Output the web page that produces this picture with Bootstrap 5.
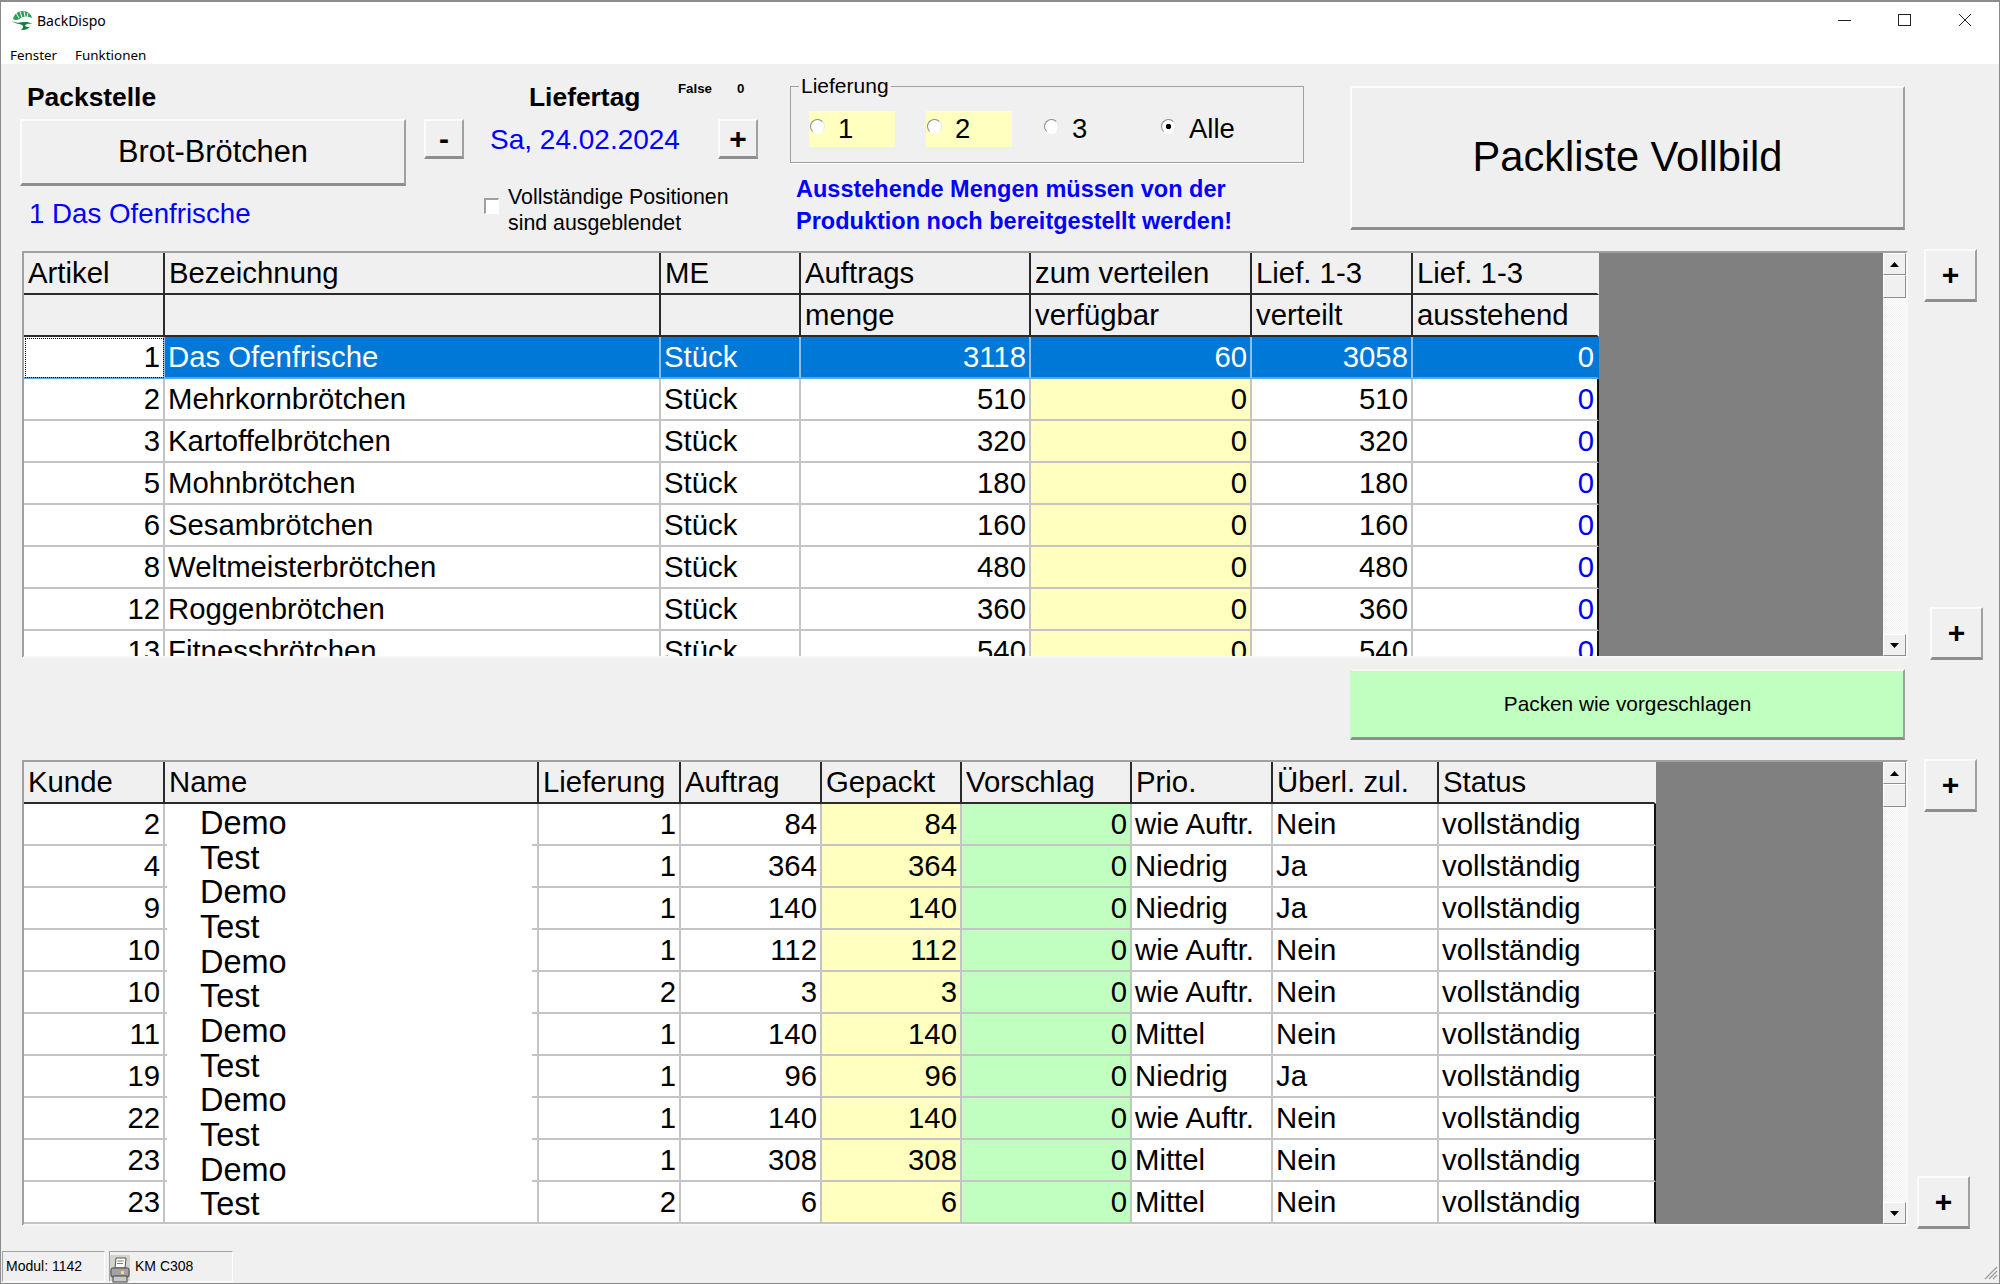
<!DOCTYPE html>
<html lang="de">
<head>
<meta charset="utf-8">
<title>BackDispo</title>
<link href="https://cdn.jsdelivr.net/npm/bootstrap@5.3.0/dist/css/bootstrap.min.css" rel="stylesheet">
<style>
html,body{margin:0;padding:0;background:#f0f0f0;}
body{font-family:"Liberation Sans",Arial,sans-serif;color:#000;}
.app-window{width:2000px;height:1284px;background:#f0f0f0;border:1px solid #8c8c8c;border-top-width:2px;overflow:hidden;}
.title-area{height:62px;background:#fff;font-family:"Noto Sans","Open Sans",sans-serif;flex:none;}
.title-row{height:38px;}
.app-logo{margin:8px 4px 0 10px;}
.app-name{font-size:14px;line-height:20px;margin-top:9px;color:#000;}
.win-ctl{width:60px;height:36px;}
.menu-row{font-size:13.4px;line-height:18px;padding:6px 0 0 9px;gap:18px;}
.tool-strip{height:187px;flex:none;}
.raised{background:#f0f0f0;border-radius:0;border:0;color:#000;padding:0;font-family:"Liberation Sans",Arial,sans-serif;
 border-top:2px solid #fbfbfb;border-left:2px solid #fbfbfb;border-right:2px solid #a0a0a0;border-bottom:3px solid #8e8e8e;}
.col-pack{margin-left:19px;width:386px;}
.lbl-head{font-weight:700;font-size:26.4px;line-height:30px;letter-spacing:0;}
.pack-head{margin-top:18px;margin-left:7px;}
.btn-brot{width:386px;height:67px;font-size:30.8px;margin-top:7px;}
.cur-art{color:#00f;font-size:27.7px;line-height:32px;margin:12px 0 0 9px;white-space:nowrap;}
.col-day{margin-left:18px;width:334px;position:relative;}
.day-top{margin-top:18px;height:37px;}
.day-head{margin-left:105px;width:149px;}
.tiny{font-size:13.3px;line-height:16px;font-weight:700;margin-top:-1px;}
.tiny-a{width:59px;}
.day-nav{height:40px;}
.btn-step{width:40px;height:40px;font-size:30px;line-height:30px;font-weight:700;}
.date-blue{color:#00f;font-size:28px;line-height:40px;margin:0 38px 0 26px;width:190px;white-space:nowrap;padding-top:1px;}
.hide-opt{margin:25px 0 0 60px;font-size:21.33px;line-height:26px;width:280px;}
.chk-box{appearance:none;width:15px;height:16px;margin:14px 9px 0 0;background:#fff;border:0;border-top:2px solid #a0a0a0;border-left:2px solid #a0a0a0;border-right:1px solid #fff;border-bottom:1px solid #fff;flex:none;}
.col-del{margin-left:32px;width:514px;margin-top:11px;}
.del-set{border:1px solid #a0a0a0;border-bottom-color:#a0a0a0;height:88px;margin:0;padding:0;width:514px;box-shadow:0 1px 0 #fff;}
.del-set legend{float:none;width:auto;font-size:21px;line-height:22px;margin:0 0 0 8px;padding:0 2px;}
.opt-wrap{padding:14px 0 0 18px;}
.opt-cell{height:36px;font-size:27.5px;line-height:36px;display:flex;align-items:center;}
.opt-yel{background:#ffffc0;width:86px;margin-right:31px;}
.opt-plain{width:117px;}
.opt-plain:last-child{width:90px;}
.opt-cell input{appearance:none;width:15px;height:15px;margin:-5px 13px 0 1px;flex:none;border-radius:50%;background:#fff;border:1px solid;border-color:#8a8a8a #e8e8e8 #fff #8a8a8a;}
.opt-cell input:checked{background:radial-gradient(circle,#000 0,#000 2.5px,#fff 3px);}
.warn-txt{color:#00f;font-weight:700;font-size:23.5px;line-height:32px;margin:10px 0 0 6px;white-space:nowrap;}
.col-full{margin-left:46px;margin-top:22px;}
.btn-full{width:555px;height:144px;font-size:41.6px;background:#efefef;}
.data-row{flex:none;}
.grid-frame{width:1886px;margin-left:21px;background:#808080;border:2px solid;border-color:#a0a0a0 #f8f8f8 #f8f8f8 #a0a0a0;position:relative;overflow:hidden;}
.grid-a{height:407px;}
.grid-b{height:466px;}
.pack-table.table{table-layout:fixed;margin:0;border-collapse:separate;border-spacing:0;font-size:29.33px;flex:none;}
.grid-a .pack-table.table{width:1575px;}
.grid-b .pack-table.table{width:1632px;}
.pack-table.table>*>tr>*{padding:0 3px;height:41.67px;line-height:40px;vertical-align:top;white-space:nowrap;overflow:hidden;box-shadow:none;background:#fff;color:#000;border:0;border-right:2px solid #c4c4c4;border-bottom:2px solid #c4c4c4;font-weight:400;}
.pack-table.table>thead>tr>th{background:#f0f0f0;border-right:2px solid #2a2a2a;border-bottom:2px solid #2a2a2a;padding-left:4px;}
.pack-table.table>thead>tr>th:last-child{border-right-color:#f0f0f0;}
.pack-table.table>*>tr>td:last-child{border-right:2px solid #111;}
.pack-table.table>*>tr>td.cell-yel{background:#ffffc0;}
.pack-table.table>*>tr>td.cell-grn{background:#c0ffc0;}
.pack-table.table>*>tr>td.cell-blue{color:#00f;}
.pack-table.table>*>tr.row-sel>td{background:#0078d7;color:#fff;border-bottom-color:#5aa6e3;border-right-color:#8dbfe8;}
.pack-table.table>*>tr.row-sel>td:last-child{border-right-color:#0078d7;}
.pack-table.table>*>tr.row-sel>td.cell-focus{background:#fff;color:#000;outline:1px dotted #000;outline-offset:-2px;}
.scroll-track{width:23px;background-color:#f4f4f4;background-image:repeating-conic-gradient(#fff 0 25%,#f0f0f0 0 50%);background-size:2px 2px;flex:none;}
.sb-btn{height:22px;background:#f0f0f0;border:1px solid;border-color:#fff #8e8e8e #8e8e8e #fff;flex:none;}
.sb-thumb{height:23px;background:#f0f0f0;border:1px solid;border-color:#fff #8e8e8e #8e8e8e #fff;flex:none;}
.filler{background:#808080;}
.side-stack{margin-left:16px;}
.side-a{height:411px;margin-top:-2px;}
.side-b{height:470px;margin-top:-1px;}
.btn-side{width:53px;height:53px;font-size:30px;line-height:30px;font-weight:700;}
.shift-a{margin-left:6px;}
.shift-b{margin-left:-7px;}
.green-row{margin:9px 0 0 1349px;flex:none;}
.btn-green{width:555px;height:71px;background:#c0ffc0;font-size:20.8px;border-top-color:#f8f8f8;border-left-color:#c0ffc0;}
.data-row-b{margin-top:20px;}
.name-cover{position:absolute;left:143px;top:44px;width:365px;height:414px;background:#fff;padding-left:33px;font-size:32.5px;line-height:34.67px;}
.status-bar{margin-top:auto;height:32px;padding-left:1px;flex:none;font-size:14px;}
.stat-box{height:31px;border:1px solid;border-color:#a0a0a0 #fff #fff #a0a0a0;line-height:29px;white-space:nowrap;}
.stat-a{width:103px;padding-left:3px;}
.stat-b{width:124px;margin-left:4px;}
.prn-box{width:20px;height:26px;background:#d6d3ca;margin:3px 5px 0 0;}
.grip{margin-left:auto;margin-top:14px;margin-right:1px;}
</style>
</head>
<body>
<div class="app-window d-flex flex-column">

  <header class="title-area">
    <div class="title-row d-flex">
      <svg class="app-logo" width="22" height="22" viewBox="0 0 22 22">
        <path d="M2 9C3 4 7 1 12 1c5 0 8 3 9 7-4-2-8-2-11 0-3 2-6 3-8 1z" fill="#2f9e58"/>
        <path d="M5 3l3 5M9 1.500l2 6M13 1.500l1 5M17 3l-1 4" stroke="#fff" stroke-width="1"/>
        <path d="M1 11c4 3 9 1 14 1 3 0 5 1 6 2-3-.5-6 0-7 1.500 1 1.500 3 2 5 1-2 3-6 4-9 3 2-1 3-3 1-4.500-3-2-8-1-10-4z" fill="#15803d"/>
      </svg>
      <div class="app-name">BackDispo</div>
      <div class="ms-auto d-flex me-1">
        <div class="win-ctl d-flex align-items-center justify-content-center"><svg width="14" height="12" viewBox="0 0 14 12"><path d="M0 6.500h13" stroke="#222"/></svg></div>
        <div class="win-ctl d-flex align-items-center justify-content-center"><svg width="14" height="14" viewBox="0 0 14 14"><rect x=".5" y="1.500" width="12" height="11" fill="none" stroke="#222"/></svg></div>
        <div class="win-ctl d-flex align-items-center justify-content-center"><svg width="14" height="14" viewBox="0 0 14 14"><path d="M1 1l12 12M13 1L1 13" stroke="#222"/></svg></div>
      </div>
    </div>
    <nav class="menu-row d-flex"><span>Fenster</span><span>Funktionen</span></nav>
  </header>

  <section class="tool-strip d-flex">
    <div class="col-pack">
      <div class="lbl-head pack-head">Packstelle</div>
      <button type="button" class="btn raised btn-brot">Brot-Brötchen</button>
      <div class="cur-art">1 Das Ofenfrische</div>
    </div>
    <div class="col-day">
      <div class="day-top d-flex">
        <div class="lbl-head day-head">Liefertag</div>
        <div class="tiny tiny-a">False</div>
        <div class="tiny">0</div>
      </div>
      <div class="day-nav d-flex">
        <button type="button" class="btn raised btn-step">-</button>
        <div class="date-blue">Sa, 24.02.2024</div>
        <button type="button" class="btn raised btn-step">+</button>
      </div>
      <label class="hide-opt d-flex">
        <input type="checkbox" class="chk-box">
        <span>Vollständige Positionen<br>sind ausgeblendet</span>
      </label>
    </div>
    <div class="col-del">
      <fieldset class="del-set">
        <legend>Lieferung</legend>
        <div class="opt-wrap d-flex">
          <label class="opt-cell opt-yel"><input type="radio" name="lf">1</label>
          <label class="opt-cell opt-yel"><input type="radio" name="lf">2</label>
          <label class="opt-cell opt-plain"><input type="radio" name="lf">3</label>
          <label class="opt-cell opt-plain"><input type="radio" name="lf" checked>Alle</label>
        </div>
      </fieldset>
      <div class="warn-txt">Ausstehende Mengen müssen von der<br>Produktion noch bereitgestellt werden!</div>
    </div>
    <div class="col-full">
      <button type="button" class="btn raised btn-full">Packliste Vollbild</button>
    </div>
  </section>

  <section class="data-row d-flex">
    <div class="grid-frame grid-a d-flex">
      <table class="table pack-table">
        <colgroup><col style="width:141px"><col style="width:496px"><col style="width:140px"><col style="width:230px"><col style="width:221px"><col style="width:161px"><col style="width:186px"></colgroup>
        <thead>
          <tr><th>Artikel</th><th>Bezeichnung</th><th>ME</th><th>Auftrags</th><th>zum verteilen</th><th>Lief. 1-3</th><th>Lief. 1-3</th></tr>
          <tr><th></th><th></th><th></th><th>menge</th><th>verfügbar</th><th>verteilt</th><th>ausstehend</th></tr>
        </thead>
        <tbody>
          <tr class="row-sel"><td class="text-end cell-focus">1</td><td>Das Ofenfrische</td><td>Stück</td><td class="text-end">3118</td><td class="text-end">60</td><td class="text-end">3058</td><td class="text-end">0</td></tr>
          <tr><td class="text-end">2</td><td>Mehrkornbrötchen</td><td>Stück</td><td class="text-end">510</td><td class="text-end cell-yel">0</td><td class="text-end">510</td><td class="text-end cell-blue">0</td></tr>
          <tr><td class="text-end">3</td><td>Kartoffelbrötchen</td><td>Stück</td><td class="text-end">320</td><td class="text-end cell-yel">0</td><td class="text-end">320</td><td class="text-end cell-blue">0</td></tr>
          <tr><td class="text-end">5</td><td>Mohnbrötchen</td><td>Stück</td><td class="text-end">180</td><td class="text-end cell-yel">0</td><td class="text-end">180</td><td class="text-end cell-blue">0</td></tr>
          <tr><td class="text-end">6</td><td>Sesambrötchen</td><td>Stück</td><td class="text-end">160</td><td class="text-end cell-yel">0</td><td class="text-end">160</td><td class="text-end cell-blue">0</td></tr>
          <tr><td class="text-end">8</td><td>Weltmeisterbrötchen</td><td>Stück</td><td class="text-end">480</td><td class="text-end cell-yel">0</td><td class="text-end">480</td><td class="text-end cell-blue">0</td></tr>
          <tr><td class="text-end">12</td><td>Roggenbrötchen</td><td>Stück</td><td class="text-end">360</td><td class="text-end cell-yel">0</td><td class="text-end">360</td><td class="text-end cell-blue">0</td></tr>
          <tr><td class="text-end">13</td><td>Fitnessbrötchen</td><td>Stück</td><td class="text-end">540</td><td class="text-end cell-yel">0</td><td class="text-end">540</td><td class="text-end cell-blue">0</td></tr>
        </tbody>
      </table>
      <div class="filler flex-grow-1"></div>
      <div class="scroll-track d-flex flex-column">
        <div class="sb-btn d-flex align-items-center justify-content-center"><svg width="9" height="5" viewBox="0 0 9 5"><path d="M4.500 0L9 5H0z" fill="#000"/></svg></div>
        <div class="sb-thumb"></div>
        <div class="sb-btn mt-auto d-flex align-items-center justify-content-center"><svg width="9" height="5" viewBox="0 0 9 5"><path d="M0 0h9L4.500 5z" fill="#000"/></svg></div>
      </div>
    </div>
    <div class="side-stack side-a d-flex flex-column justify-content-between">
      <button type="button" class="btn raised btn-side">+</button>
      <button type="button" class="btn raised btn-side shift-a">+</button>
    </div>
  </section>

  <div class="green-row">
    <button type="button" class="btn raised btn-green">Packen wie vorgeschlagen</button>
  </div>

  <section class="data-row data-row-b d-flex">
    <div class="grid-frame grid-b d-flex">
      <table class="table pack-table">
        <colgroup><col style="width:141px"><col style="width:374px"><col style="width:142px"><col style="width:141px"><col style="width:140px"><col style="width:170px"><col style="width:141px"><col style="width:166px"><col style="width:217px"></colgroup>
        <thead>
          <tr><th>Kunde</th><th>Name</th><th>Lieferung</th><th>Auftrag</th><th>Gepackt</th><th>Vorschlag</th><th>Prio.</th><th>Überl. zul.</th><th>Status</th></tr>
        </thead>
        <tbody>
          <tr><td class="text-end">2</td><td></td><td class="text-end">1</td><td class="text-end">84</td><td class="text-end cell-yel">84</td><td class="text-end cell-grn">0</td><td>wie Auftr.</td><td>Nein</td><td>vollständig</td></tr>
          <tr><td class="text-end">4</td><td></td><td class="text-end">1</td><td class="text-end">364</td><td class="text-end cell-yel">364</td><td class="text-end cell-grn">0</td><td>Niedrig</td><td>Ja</td><td>vollständig</td></tr>
          <tr><td class="text-end">9</td><td></td><td class="text-end">1</td><td class="text-end">140</td><td class="text-end cell-yel">140</td><td class="text-end cell-grn">0</td><td>Niedrig</td><td>Ja</td><td>vollständig</td></tr>
          <tr><td class="text-end">10</td><td></td><td class="text-end">1</td><td class="text-end">112</td><td class="text-end cell-yel">112</td><td class="text-end cell-grn">0</td><td>wie Auftr.</td><td>Nein</td><td>vollständig</td></tr>
          <tr><td class="text-end">10</td><td></td><td class="text-end">2</td><td class="text-end">3</td><td class="text-end cell-yel">3</td><td class="text-end cell-grn">0</td><td>wie Auftr.</td><td>Nein</td><td>vollständig</td></tr>
          <tr><td class="text-end">11</td><td></td><td class="text-end">1</td><td class="text-end">140</td><td class="text-end cell-yel">140</td><td class="text-end cell-grn">0</td><td>Mittel</td><td>Nein</td><td>vollständig</td></tr>
          <tr><td class="text-end">19</td><td></td><td class="text-end">1</td><td class="text-end">96</td><td class="text-end cell-yel">96</td><td class="text-end cell-grn">0</td><td>Niedrig</td><td>Ja</td><td>vollständig</td></tr>
          <tr><td class="text-end">22</td><td></td><td class="text-end">1</td><td class="text-end">140</td><td class="text-end cell-yel">140</td><td class="text-end cell-grn">0</td><td>wie Auftr.</td><td>Nein</td><td>vollständig</td></tr>
          <tr><td class="text-end">23</td><td></td><td class="text-end">1</td><td class="text-end">308</td><td class="text-end cell-yel">308</td><td class="text-end cell-grn">0</td><td>Mittel</td><td>Nein</td><td>vollständig</td></tr>
          <tr><td class="text-end">23</td><td></td><td class="text-end">2</td><td class="text-end">6</td><td class="text-end cell-yel">6</td><td class="text-end cell-grn">0</td><td>Mittel</td><td>Nein</td><td>vollständig</td></tr>
          <tr><td></td><td></td><td></td><td></td><td class="cell-yel"></td><td class="cell-grn"></td><td></td><td></td><td></td></tr>
        </tbody>
      </table>
      <div class="name-cover">Demo<br>Test<br>Demo<br>Test<br>Demo<br>Test<br>Demo<br>Test<br>Demo<br>Test<br>Demo<br>Test</div>
      <div class="filler flex-grow-1"></div>
      <div class="scroll-track d-flex flex-column">
        <div class="sb-btn d-flex align-items-center justify-content-center"><svg width="9" height="5" viewBox="0 0 9 5"><path d="M4.500 0L9 5H0z" fill="#000"/></svg></div>
        <div class="sb-thumb"></div>
        <div class="sb-btn mt-auto d-flex align-items-center justify-content-center"><svg width="9" height="5" viewBox="0 0 9 5"><path d="M0 0h9L4.500 5z" fill="#000"/></svg></div>
      </div>
    </div>
    <div class="side-stack side-b d-flex flex-column justify-content-between">
      <button type="button" class="btn raised btn-side">+</button>
      <button type="button" class="btn raised btn-side shift-b">+</button>
    </div>
  </section>

  <footer class="status-bar d-flex">
    <div class="stat-box stat-a">Modul: 1142</div>
    <div class="stat-box stat-b d-flex">
      <div class="prn-box">
        <svg width="20" height="26" viewBox="0 0 20 26">
          <path d="M6 1h10l-1 10H5z" fill="#fff" stroke="#555"/>
          <path d="M7.500 4h6M7 6.500h6" stroke="#777"/>
          <rect x="1" y="11" width="18" height="9" rx="1.500" fill="#a3a3a3" stroke="#444"/>
          <rect x="3" y="19" width="14" height="6" fill="#c8c8c8" stroke="#444"/>
          <rect x="11" y="14" width="3" height="3" fill="#ffe640"/>
        </svg>
      </div>
      <span>KM C308</span>
    </div>
    <svg class="grip" width="15" height="15" viewBox="0 0 15 15"><path d="M14 2L2 14M14 6L6 14M14 10l-4 4" stroke="#9a9a9a" stroke-width="1.200" fill="none"/></svg>
  </footer>
</div>
<script src="https://cdn.jsdelivr.net/npm/bootstrap@5.3.0/dist/js/bootstrap.bundle.min.js"></script>
</body>
</html>
